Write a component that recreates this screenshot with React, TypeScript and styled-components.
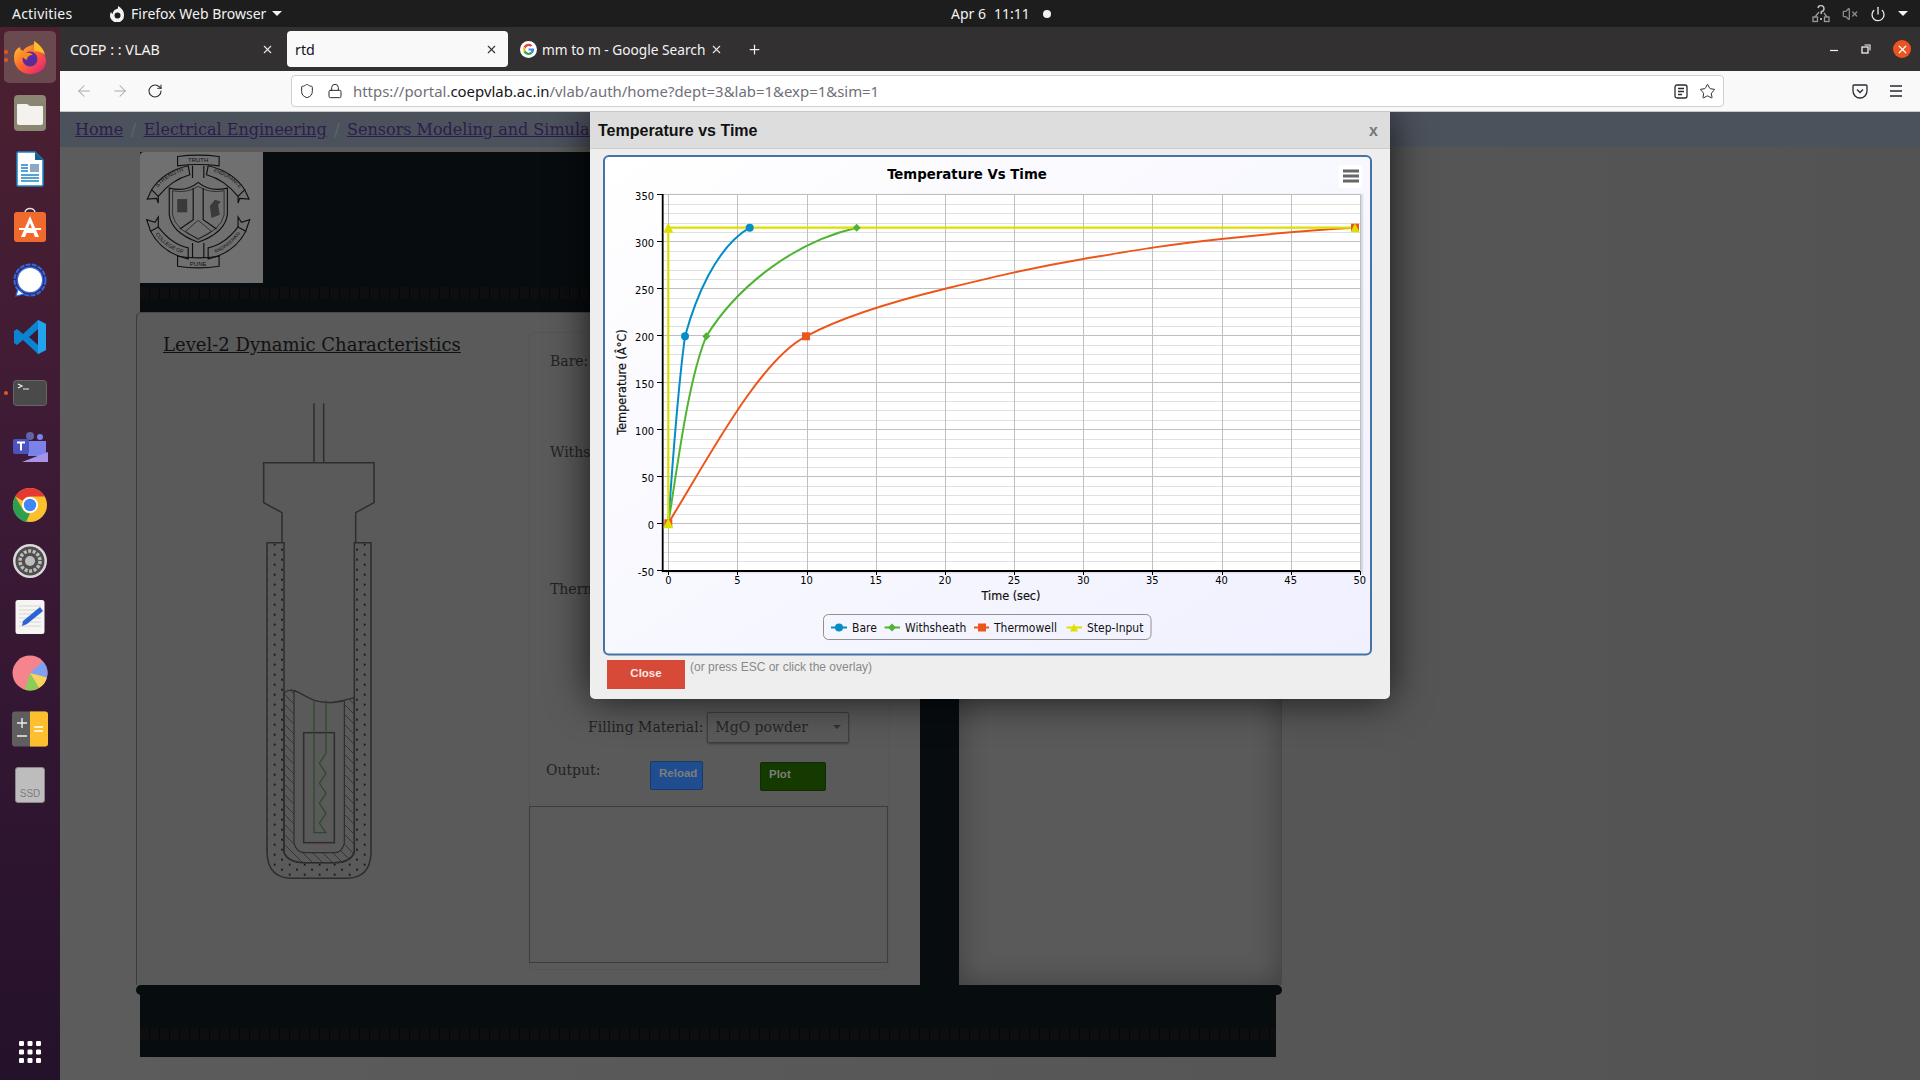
import React from "react";
import styled, { createGlobalStyle } from "styled-components";
import { ArrowLeft, ArrowRight, RotateCw, Shield, Lock, Star, X, Plus, Power, VolumeX } from "lucide-react";

const Global = createGlobalStyle`
  html, body { margin: 0; padding: 0; width: 1920px; height: 1080px; overflow: hidden; background: #575757; }
  * { box-sizing: border-box; }
`;

const UI = `"Noto Sans", "Open Sans", sans-serif`;
const SERIF = `"DejaVu Serif", "Liberation Serif", serif`;
const CHART = `"DejaVu Sans Condensed", "DejaVu Sans", sans-serif`;

const Screen = styled.div`
  width: 1920px;
  height: 1080px;
  display: flex;
  flex-direction: column;
  overflow: hidden;
`;
const TopBar = styled.div`
  height: 27px;
  background: #1d1d1d;
  color: #f2f2f2;
  font: 14px ${UI};
  display: flex;
  align-items: center;
  padding-left: 12px;
  flex: none;
`;
const Activities = styled.span`
  width: 97px;
  letter-spacing: 0.2px;
`;
const AppMenu = styled.div`
  display: flex;
  align-items: center;
  gap: 6px;
  width: 842px;
`;
const Caret = styled.span`
  width: 0;
  height: 0;
  border-left: 5px solid transparent;
  border-right: 5px solid transparent;
  border-top: 5px solid #f2f2f2;
`;
const Clock = styled.div`
  display: flex;
  gap: 8px;
  width: 861px;
  align-items: center;
`;
const ClockDot = styled.span`
  width: 8px;
  height: 8px;
  border-radius: 50%;
  background: #f2f2f2;
  margin-left: 5px;
`;
const Tray = styled.div`
  display: flex;
  align-items: center;
  gap: 12px;
`;
const Body = styled.div`
  flex: 1;
  display: flex;
  min-height: 0;
`;
const Dock = styled.div`
  width: 60px;
  flex: none;
  background: linear-gradient(180deg, #4c2030 0%, #3c1a36 45%, #24112a 100%);
  display: flex;
  flex-direction: column;
  align-items: center;
  padding: 2px 0 14px;
`;
const DockSlot = styled.div<{ $active?: boolean }>`
  position: relative;
  width: 52px;
  height: 56px;
  padding: 2px 0;
  display: flex;
  align-items: center;
  justify-content: center;
  flex: none;
  border-radius: 6px;
  background: ${(p) => (p.$active ? "#6a4a4e" : "transparent")};
  background-clip: content-box;
`;
const DockDot = styled.span<{ $top: number }>`
  position: absolute;
  left: 0;
  top: ${(p) => p.$top}px;
  width: 4px;
  height: 4px;
  border-radius: 50%;
  background: #e95420;
`;
const DockGrid = styled.div`
  margin-top: auto;
  height: 28px;
  display: flex;
  align-items: center;
`;
const Main = styled.div`
  flex: 1;
  display: flex;
  flex-direction: column;
  min-width: 0;
`;
const TabBar = styled.div`
  height: 44px;
  background: #323031;
  display: flex;
  align-items: center;
  color: #f4f4f4;
  font: 14.3px ${UI};
  flex: none;
`;
const Tab = styled.div<{ $w: number; $active?: boolean; $pl: number; $pr: number }>`
  width: ${(p) => p.$w}px;
  height: 36px;
  padding: 0 ${(p) => p.$pr}px 0 ${(p) => p.$pl}px;
  border-radius: 4px;
  display: flex;
  align-items: center;
  gap: 5px;
  background: ${(p) => (p.$active ? "#f9f9fa" : "transparent")};
  color: ${(p) => (p.$active ? "#15141a" : "#f4f4f4")};
  flex: none;
  svg {
    flex: none;
  }
`;
const TabTitle = styled.span<{ $size?: number }>`
  flex: 1;
  min-width: 0;
  white-space: nowrap;
  font-size: ${(p) => p.$size ?? 14.3}px;
`;
const NewTab = styled.span`
  display: flex;
  margin-left: 16px;
`;
const WinControls = styled.div`
  margin-left: auto;
  display: flex;
  align-items: center;
  gap: 22px;
  padding-right: 9px;
`;
const WinClose = styled.div`
  width: 18px;
  height: 18px;
  border-radius: 50%;
  background: #e95420;
  display: flex;
  align-items: center;
  justify-content: center;
  color: #fff;
`;
const NavBar = styled.div`
  height: 41px;
  background: #f9f9fa;
  border-bottom: 1px solid #c8c8c8;
  display: flex;
  align-items: center;
  flex: none;
`;
const NavButtons = styled.div`
  display: flex;
  align-items: center;
  gap: 18px;
  margin-left: 15px;
  width: 216px;
`;
const UrlBox = styled.div`
  width: 1433px;
  height: 32px;
  background: #fff;
  border: 1px solid #cfcfd4;
  border-radius: 4px;
  display: flex;
  align-items: center;
  padding: 0 7px 0 7px;
  font: 14.93px ${UI};
  color: #70707a;
`;
const UrlIcons = styled.div`
  display: flex;
  gap: 12px;
  align-items: center;
  width: 47px;
  margin-right: 7px;
`;
const UrlHost = styled.span`
  color: #15141a;
`;
const UrlEnd = styled.div`
  margin-left: auto;
  display: flex;
  gap: 11px;
  align-items: center;
`;
const NavEnd = styled.div`
  display: flex;
  align-items: center;
  gap: 21px;
  margin-left: 128px;
`;
const Page = styled.div`
  position: relative;
  flex: 1;
  overflow: hidden;
  background: linear-gradient(90deg, #5c5c5c, #535353);
  font-family: ${SERIF};
  display: flex;
  flex-direction: column;
  min-height: 0;
`;
const Crumbs = styled.div`
  height: 35px;
  background: #4c525c;
  padding-left: 15px;
  display: flex;
  align-items: center;
  gap: 7.5px;
  font-size: 16px;
  white-space: nowrap;
  overflow: hidden;
  flex: none;
`;
const Crumb = styled.span`
  color: #2c1c4e;
  text-decoration: underline;
`;
const Slash = styled.span`
  color: #5e6470;
`;
const Banner = styled.div`
  width: 1136px;
  height: 160px;
  margin: 5px 0 0 80px;
  background: #070c0f;
  flex: none;
`;
const LogoWrap = styled.div`
  width: 123px;
  height: 131px;
  background: #707070;
  border-radius: 4px 0 0 0;
  overflow: hidden;
`;
const Stripe = styled.div`
  height: 12px;
  margin-top: 4px;
  background: repeating-linear-gradient(90deg, #0c0e0f 0 9px, #040607 9px 10px);
`;
const FootStripe = styled(Stripe)`
  margin-top: 0;
`;
const Card = styled.div`
  width: 1146px;
  height: 673px;
  margin-left: 76px;
  display: flex;
  flex: none;
`;
const CardLeft = styled.div`
  width: 784px;
  background: #5a5a5a;
  border-left: 1px solid #3a3a3a;
  border-top: 1px solid #484848;
  border-radius: 5px 0 0 0;
  display: flex;
`;
const DiagramCol = styled.div`
  width: 392px;
  flex: none;
`;
const Heading = styled.h2`
  margin: 20px 0 0 26px;
  height: 26px;
  font: 400 18.05px/24px ${SERIF};
  color: #111;
  text-decoration: underline;
  white-space: nowrap;
`;
const SensorSvg = styled.svg`
  display: block;
  margin: 21px 0 0 103px;
`;
const FormPanel = styled.div`
  width: 361px;
  height: 638px;
  margin-top: 19px;
  border: 1px solid #555;
  border-radius: 5px;
  display: flex;
  flex-direction: column;
  font-size: 14px;
  color: #222;
`;
const FieldLabel = styled.div<{ $top: number }>`
  margin: ${(p) => p.$top}px 0 0 20px;
  height: 24px;
  line-height: 24px;
  white-space: nowrap;
`;
const FillRow = styled.div`
  display: flex;
  align-items: center;
  gap: 4px;
  margin: 111px 0 0 58px;
  height: 30px;
`;
const Select = styled.div`
  width: 142px;
  height: 31px;
  border: 1px solid #3e3e3e;
  border-radius: 2px;
  box-shadow: 0 1px 2px rgba(0, 0, 0, 0.3);
  padding: 0 7px;
  display: flex;
  align-items: center;
  justify-content: space-between;
  color: #262626;
`;
const SelectCaret = styled.span`
  width: 0;
  height: 0;
  border-left: 4px solid transparent;
  border-right: 4px solid transparent;
  border-top: 4px solid #333;
`;
const OutputRow = styled.div`
  height: 30px;
  margin-top: 19px;
  display: flex;
  align-items: flex-start;
`;
const OutputLabel = styled.div`
  margin-left: 16px;
  width: 104px;
  line-height: 18px;
`;
const ActionButton = styled.div<{ $w: number; $bg: string; $mt: number; $ml: number }>`
  width: ${(p) => p.$w}px;
  height: 29px;
  margin: ${(p) => p.$mt}px 0 0 ${(p) => p.$ml}px;
  background: ${(p) => p.$bg};
  border: 1px solid rgba(0, 0, 0, 0.25);
  border-radius: 2px;
  color: #7d7d7d;
  font: bold 11.5px "Liberation Sans", sans-serif;
  padding: 5px 8px;
`;
const OutBox = styled.div`
  width: 359px;
  height: 157px;
  margin: 15px 0 0 -1px;
  border: 1px solid #3d3d3d;
`;
const CardGap = styled.div`
  width: 39px;
  background: #070c0f;
`;
const CardRight = styled.div`
  width: 323px;
  background: #5a5a5a;
  box-shadow: inset 0 0 30px rgba(0, 0, 0, 0.3);
  border-right: 1px solid #474747;
`;
const BarEnd = styled.div`
  width: 1146px;
  height: 10px;
  margin-left: 76px;
  background: #070c0f;
  border-radius: 5px;
  flex: none;
`;
const Footer = styled.div`
  width: 1136px;
  height: 63px;
  margin-left: 80px;
  margin-top: -1px;
  padding-top: 34px;
  background: #070c0f;
  flex: none;
`;
const Modal = styled.div`
  position: absolute;
  left: 530px;
  top: 0;
  width: 800px;
  height: 587px;
  background: #eee;
  border-radius: 0 0 5px 5px;
  box-shadow: 0 0 40px rgba(0, 0, 0, 0.75);
  display: flex;
  flex-direction: column;
`;
const ModalHead = styled.div`
  height: 37px;
  background: #ddd;
  border-bottom: 1px solid #ccc;
  display: flex;
  align-items: center;
  justify-content: space-between;
  padding: 1px 12px 0 8px;
  font: bold 16px "Liberation Sans", sans-serif;
  color: #111;
  flex: none;
`;
const ModalX = styled.span`
  color: #777;
  font-size: 16px;
`;
const ChartSvg = styled.svg`
  display: block;
  margin: 6px 0 0 13px;
  flex: none;
`;
const ModalFoot = styled.div`
  display: flex;
  margin: 4px 0 0 17px;
  gap: 5px;
`;
const CloseButton = styled.div`
  width: 78px;
  height: 29px;
  background: #d64a37;
  color: #f6e9e6;
  font: bold 11.5px/27px "Liberation Sans", sans-serif;
  text-align: center;
`;
const Hint = styled.div`
  padding-top: 1px;
  font: 12px/13px "Liberation Sans", sans-serif;
  color: #888;
`;

const Firefox = () => (
  <svg width="36" height="36" viewBox="0 0 36 36">
    <defs>
      <linearGradient id="ff" x1="0" y1="0" x2="1" y2="1">
        <stop offset="0" stopColor="#ffcb2e" />
        <stop offset=".45" stopColor="#ff6a2a" />
        <stop offset="1" stopColor="#e31587" />
      </linearGradient>
    </defs>
    <path d="M2 19C2 11 6 9 8 8c0 2 1 3 3 4 2-4 7-5 11-7-1 3 0 4 3 5 6 3 9 7 9 12 0 8-7 13-16 13S2 28 2 19z" fill="url(#ff)" />
    <path d="M22 2c5 3 10 8 11 14-3-3-7-4-11-4z" fill="#ffbd2e" />
    <circle cx="18" cy="20" r="7.5" fill="#5b2a9e" />
    <path d="M9 15c4-2 9-2 12 1-4 0-6 2-6 5-3-1-5-3-6-6z" fill="#ff8a1e" />
  </svg>
);
const Files = () => (
  <svg width="36" height="38" viewBox="0 0 36 38">
    <rect x="2" y="1" width="32" height="36" rx="4" fill="#8a8672" />
    <path d="M6 10h9l3 2h12a1 1 0 0 1 1 1v16a2 2 0 0 1-2 2H7a2 2 0 0 1-2-2V11a1 1 0 0 1 1-1z" fill="#f4f2ee" />
  </svg>
);
const Writer = () => (
  <svg width="30" height="36" viewBox="0 0 30 36">
    <path d="M3 1h17l8 8v25a1 1 0 0 1-1 1H3a1 1 0 0 1-1-1V2a1 1 0 0 1 1-1z" fill="#fff" stroke="#1b85c6" strokeWidth="1.5" />
    <path d="M20 1l8 8h-8z" fill="#18618f" />
    <path d="M6 14h7M6 17h7M6 20h7M6 24h18M6 27h18M6 30h18" stroke="#1b85c6" strokeWidth="1.6" />
    <rect x="15" y="13" width="9" height="8" fill="#89a9c4" />
  </svg>
);
const Store = () => (
  <svg width="36" height="38" viewBox="0 0 36 38">
    <path d="M13 7c0-6 10-6 10 0" fill="none" stroke="#ddd" strokeWidth="1.6" />
    <rect x="2" y="6" width="32" height="30" rx="3" fill="#ef6a2c" />
    <path d="M18 10l9 21h-4l-1.6-4h-6.8L13 31H9zM15.5 24h5L18 17z" fill="#fff" />
    <rect x="7" y="22" width="22" height="2" fill="#fff" />
  </svg>
);
const Signal = () => (
  <svg width="34" height="36" viewBox="0 0 34 36">
    <circle cx="17" cy="17" r="15.5" fill="none" stroke="#2c6bed" strokeWidth="2" strokeDasharray="5 1.2" />
    <circle cx="17" cy="17" r="13.5" fill="#2c6bed" />
    <circle cx="17" cy="17" r="12" fill="#fff" />
    <path d="M5 26l-2 7 8-2z" fill="#fff" stroke="#2c6bed" strokeWidth="1.2" />
  </svg>
);
const VSCode = () => (
  <svg width="36" height="36" viewBox="0 0 36 36">
    <path d="M26 1l8 4v26l-8 4L11 21l-6 5-3-2v-12l3-2 6 5z" fill="#0a84d0" />
    <path d="M26 10l-9 8 9 8z" fill="#3c1a36" />
    <path d="M26 1l8 4v26l-8 4z" fill="#22a3ec" />
  </svg>
);
const Terminal = () => (
  <svg width="34" height="26" viewBox="0 0 34 26">
    <rect x="0.5" y="0.5" width="33" height="25" rx="3" fill="#4a4a4a" stroke="#666" />
    <path d="M5 4l4 2-4 2M10 9h6" fill="none" stroke="#eee" strokeWidth="1.2" />
  </svg>
);
const Teams = () => (
  <svg width="36" height="34" viewBox="0 0 36 34">
    <circle cx="18" cy="4" r="4" fill="#6264a7" />
    <circle cx="28" cy="5" r="3" fill="#7b83eb" />
    <rect x="16" y="9" width="18" height="15" fill="#7b83eb" />
    <path d="M10 30l26-10v10z" fill="#a794e6" />
    <rect x="1" y="7" width="16" height="15" rx="2" fill="#4b53bc" />
    <path d="M5 10.500h8M9 10.500v8" stroke="#fff" strokeWidth="2" />
  </svg>
);
const Chrome = () => (
  <svg width="36" height="36" viewBox="0 0 36 36">
    <circle cx="18" cy="18" r="17" fill="#fbc02d" />
    <path d="M18 1a17 17 0 0 1 14.700 8.500H18a8.500 8.500 0 0 0-7.400 4.300L3.300 9.500A17 17 0 0 1 18 1z" fill="#e53935" />
    <path d="M3.300 9.500l7.400 12.800a8.500 8.500 0 0 0 7.300 4.200L14 35a17 17 0 0 1-10.700-25.500z" fill="#2e9e4f" />
    <circle cx="18" cy="18" r="8" fill="#fff" />
    <circle cx="18" cy="18" r="6.200" fill="#4285f4" />
  </svg>
);
const Settings = () => (
  <svg width="36" height="36" viewBox="0 0 36 36">
    <circle cx="18" cy="18" r="17" fill="#d9d9d9" />
    <circle cx="18" cy="18" r="14.500" fill="#4f4f4f" />
    <circle cx="18" cy="18" r="10" fill="none" stroke="#bdbdbd" strokeWidth="3.500" strokeDasharray="3 1.500" />
    <circle cx="18" cy="18" r="5" fill="#bdbdbd" />
  </svg>
);
const Editor = () => (
  <svg width="30" height="36" viewBox="0 0 30 36">
    <rect x="0.5" y="1" width="29" height="34" rx="2.500" fill="#f6f5f4" />
    <path d="M4 7h22M4 11h22M4 15h22M4 19h22M4 23h22M4 27h22" stroke="#d5d5d5" />
    <path d="M25 8l3 4L12 25l-5 2 1-5z" fill="#2a63d6" />
  </svg>
);
const Pie = () => (
  <svg width="36" height="36" viewBox="0 0 36 36">
    <circle cx="18" cy="18" r="17.500" fill="#f5848c" />
    <path d="M18 18L31 6.500A17.500 17.500 0 0 1 35.500 18a17 17 0 0 1-.6 4.500z" fill="#7ea1f2" />
    <path d="M18 18l16.900 4.500A17.500 17.500 0 0 1 27 33z" fill="#f6d55c" />
    <path d="M18 18l9 15A17.500 17.500 0 0 1 13 34.800z" fill="#8ccd5a" />
  </svg>
);
const Calc = () => (
  <svg width="36" height="36" viewBox="0 0 36 36">
    <rect y="0.500" width="36" height="35" rx="3" fill="#5e5e5e" />
    <path d="M18 .5h15a3 3 0 0 1 3 3v29a3 3 0 0 1-3 3H18z" fill="#fdbf2d" />
    <path d="M5 12h10M10 7v10M5 25h10" stroke="#eee" strokeWidth="1.400" />
    <path d="M22 16h9M22 20h9" stroke="#fff" strokeWidth="1.400" />
  </svg>
);
const SSD = () => (
  <svg width="30" height="36" viewBox="0 0 30 36">
    <rect x="0.500" y="0.500" width="29" height="35" rx="2.500" fill="#bdbdbd" stroke="#888" />
    <text x="15" y="30" textAnchor="middle" fontSize="10" fontFamily="Liberation Sans" fill="#7d7d7d">SSD</text>
  </svg>
);
const GridIcon = () => (
  <svg width="24" height="24" viewBox="0 0 24 24" fill="#fff">
    {[1, 9.500, 18].flatMap((y) =>
      [1, 9.500, 18].map((x) => <rect key={`${x}-${y}`} x={x} y={y} width="5" height="5" rx="1.200" />),
    )}
  </svg>
);
const Google = () => (
  <svg width="17" height="17" viewBox="0 0 16 16">
    <circle cx="8" cy="8" r="8" fill="#fff" />
    <path d="M8 2.700a5.300 5.300 0 0 1 3.500 1.300L10 5.500A3 3 0 0 0 5.200 7L3.400 5.500A5.300 5.300 0 0 1 8 2.700z" fill="#ea4335" />
    <path d="M3.400 5.500L5.200 7a3 3 0 0 0 0 2l-1.800 1.500a5.300 5.300 0 0 1 0-5z" fill="#fbbc05" />
    <path d="M3.400 10.500L5.200 9a3 3 0 0 0 4.700 1.300l1.700 1.400a5.300 5.300 0 0 1-8.200-1.200z" fill="#34a853" />
    <path d="M8 7h5.200c.3 2-.3 3.600-1.600 4.700L9.900 10.300A2 2 0 0 0 10.700 9H8z" fill="#4285f4" />
  </svg>
);
const FoxGlyph = () => (
  <svg width="16" height="16" viewBox="0 0 16 16">
    <path d="M9 0c3 2 6 4 6 9a7 7 0 1 1-13-3c.5 1 1 1.500 1.500 2C4 5 6 3 9 2.500z" fill="#f2f2f2" />
    <circle cx="8.500" cy="9.500" r="3" fill="#1d1d1d" />
  </svg>
);
const NetQuestion = () => (
  <svg width="18" height="18" viewBox="0 0 18 18" fill="none" stroke="#9a9a9a" strokeWidth="1.300">
    <rect x="1" y="12" width="4.500" height="4.500" />
    <rect x="12.500" y="12" width="4.500" height="4.500" />
    <path d="M3 12l4-5M15 12l-3-4" />
    <path d="M6 3a3 3 0 1 1 3.500 3.500L9 9" stroke="#bdbdbd" strokeWidth="1.600" />
    <circle cx="9" cy="14" r="1" fill="#ddd" stroke="none" />
  </svg>
);
const Reader = () => (
  <svg width="14" height="15" viewBox="0 0 14 15" fill="none" stroke="#2b2a33" strokeWidth="1.300">
    <rect x="1" y="1" width="12" height="13" rx="2" />
    <path d="M4 4.500h6M4 7.500h6M4 10.500h4" />
  </svg>
);
const Pocket = () => (
  <svg width="16" height="15" viewBox="0 0 16 15" fill="none" stroke="#2b2a33" strokeWidth="1.300">
    <path d="M2 1h12a1 1 0 0 1 1 1v5a7 7 0 0 1-14 0V2a1 1 0 0 1 1-1z" />
    <path d="M5 5.500l3 3 3-3" />
  </svg>
);
const Hamburger = () => (
  <svg width="14" height="12" viewBox="0 0 14 12" stroke="#2b2a33" strokeWidth="1.300">
    <path d="M1 1h12M1 6h12M1 11h12" />
  </svg>
);
const Minimize = () => (
  <svg width="10" height="10" viewBox="0 0 10 10" stroke="#f2f2f2" strokeWidth="1.200">
    <path d="M1 6.500h8" />
  </svg>
);
const Restore = () => (
  <svg width="10" height="10" viewBox="0 0 10 10" fill="none" stroke="#f2f2f2" strokeWidth="1.100">
    <rect x="1" y="3" width="6" height="6" strokeWidth="1.300" />
    <path d="M3.500 1h5.500v5.500" />
  </svg>
);

const Logo = () => (
  <svg width="123" height="131" viewBox="30 37 370 393">
    <defs>
      <path id="r1" d="M78 150Q110 108 170 92" />
      <path id="r2" d="M240 92Q300 108 338 155" />
      <path id="r3" d="M70 275Q100 325 168 345" />
      <path id="r4" d="M240 345Q310 325 340 265" />
    </defs>
    <g fill="none" stroke="#111" strokeWidth="3.500">
      <path d="M143 50Q205 42 268 50V78Q205 70 143 78z" />
      <path d="M188 78V115M222 78V115M188 355V310M222 355V310" />
      <path d="M143 350Q205 360 268 350V380Q205 390 143 380z" />
      <path d="M65 150Q100 95 175 78L180 105Q125 120 85 170z" />
      <path d="M65 150L52 178 80 176 85 190 85 170" />
      <path d="M345 150Q310 95 235 78L230 105Q285 120 325 170z" />
      <path d="M345 150L358 178 330 176 325 190 325 170" />
      <path d="M62 275Q95 340 175 358V325Q125 315 85 262z" />
      <path d="M62 275L50 240 75 248 85 232 85 262" />
      <path d="M348 275Q315 340 235 358V325Q285 315 325 262z" />
      <path d="M348 275L360 240 335 248 325 232 325 262" />
      <path d="M118 145Q170 158 205 128Q240 158 293 145V225Q285 280 205 308Q125 280 118 225z" />
      <path d="M128 153Q170 162 205 140Q240 162 283 153V225Q275 270 205 297Q135 270 128 225z" strokeWidth="2" />
      <path d="M190 145V240L150 268M220 145V240L260 268" />
      <path d="M167 275L205 242 245 275 205 300z" strokeWidth="2" />
    </g>
    <rect x="142" y="178" width="30" height="40" fill="#3a3a3a" />
    <path d="M240 200l15-20 18 5-8 10 5 30-25 10z" fill="#3a3a3a" />
    <g fontFamily="Liberation Sans, sans-serif" fontSize="18" fill="#111" textAnchor="middle">
      <text x="205" y="68">TRUTH</text>
      <text x="205" y="379">PUNE</text>
      <text fontSize="17"><textPath href="#r1" startOffset="50%">STRENGTH</textPath></text>
      <text fontSize="15"><textPath href="#r2" startOffset="50%">ENDURANCE</textPath></text>
      <text fontSize="16"><textPath href="#r3" startOffset="50%">COLLEGE OF</textPath></text>
      <text fontSize="14"><textPath href="#r4" startOffset="50%">ENGINEERING</textPath></text>
    </g>
  </svg>
);

const Sensor = () => (
  <SensorSvg width="180" height="520" viewBox="0 0 540 1560">
    <defs>
      <pattern id="hatch" width="30" height="30" patternUnits="userSpaceOnUse">
        <path d="M-5 -5L35 35M-5 25L5 35M25 -5L35 5" stroke="#2d2d2d" strokeWidth="2.500" />
      </pattern>
      <pattern id="dots" x="6" y="8" width="45" height="60" patternUnits="userSpaceOnUse">
        <circle cx="8" cy="6" r="3.200" fill="#111" />
        <circle cx="30" cy="21" r="3.200" fill="#111" />
        <circle cx="8" cy="36" r="3.200" fill="#111" />
        <circle cx="30" cy="51" r="3.200" fill="#111" />
      </pattern>
    </defs>
    <path d="M81 488H132V1418Q145 1448 195 1448H285Q330 1448 343 1418V488H393V1420Q390 1495 320 1495H155Q85 1495 81 1420z" fill="url(#dots)" stroke="#2d2d2d" strokeWidth="4.500" />
    <path d="M132 938C150 925 165 930 190 945C215 960 230 966 270 968C300 966 320 958 343 953V1418Q330 1448 285 1448H195Q145 1448 132 1418z" fill="url(#hatch)" stroke="#2d2d2d" strokeWidth="3.500" />
    <path d="M162 932V1390Q170 1418 195 1418H285Q305 1418 313 1390V962C295 966 285 968 270 968C230 966 215 960 190 945Q175 936 162 932z" fill="#5a5a5a" stroke="#2d2d2d" strokeWidth="3.500" />
    <g fill="none" stroke="#2d2d2d" strokeWidth="4.500">
      <path d="M222 70V248M251 70V248" />
      <path d="M126 488V398L71 368V248H402V368L347 398V488" />
      <rect x="191" y="1058" width="92" height="330" />
    </g>
    <path d="M222 962V1358H258L238 1330L258 1300L238 1270L258 1240L238 1210L258 1180L238 1150L258 1120V962" fill="none" stroke="#274a27" strokeWidth="3.500" />
  </SensorSvg>
);

const yOf = (v: number) => 523.3 - v * 0.94;
const xOf = (t: number) => 668.3 + t * 13.83;
const MAJOR_Y = [-50, 0, 50, 100, 150, 200, 250, 300, 350];
const MINOR_Y = Array.from({ length: 41 }, (_, i) => -50 + i * 10).filter((v) => v % 50 !== 0);
const MAJOR_X = [0, 5, 10, 15, 20, 25, 30, 35, 40, 45, 50];
const BLUE = "#058DC7";
const GREEN = "#50B432";
const ORANGE = "#ED561B";
const YELLOW = "#DDDF00";

const Tri = ({ x, y, s = 5 }: { x: number; y: number; s?: number }) => (
  <path d={`M${x} ${y - s}L${x + s} ${y + s}H${x - s}z`} fill={YELLOW} />
);
const Dia = ({ x, y, s = 4 }: { x: number; y: number; s?: number }) => (
  <path d={`M${x} ${y - s}L${x + s} ${y}L${x} ${y + s}L${x - s} ${y}z`} fill={GREEN} />
);
const Sq = ({ x, y, s = 4 }: { x: number; y: number; s?: number }) => (
  <rect x={x - s} y={y - s} width={2 * s} height={2 * s} fill={ORANGE} />
);

const Chart = () => (
  <ChartSvg width="769" height="501" viewBox="603 155 769 501" fontFamily={CHART}>
    <defs>
      <linearGradient id="chartBg" x1="0" y1="0" x2="1" y2="1">
        <stop offset="0" stopColor="#ffffff" />
        <stop offset="1" stopColor="#f0f0ff" />
      </linearGradient>
    </defs>
    <rect x="604" y="156" width="767" height="498.500" rx="5" fill="url(#chartBg)" stroke="#4572A7" strokeWidth="2" />
    <g fill="none" stroke="#000">
      <rect x="664" y="196" width="697" height="375" strokeOpacity=".05" strokeWidth="5" />
      <rect x="664" y="196" width="697" height="375" strokeOpacity=".07" strokeWidth="3" />
    </g>
    <rect x="662.500" y="194.500" width="697.500" height="375.500" fill="#fff" />
    <g stroke="#E0E0E0">
      {MINOR_Y.map((v) => (
        <path key={v} d={`M662.500 ${Math.round(yOf(v)) + 0.5}H1360`} />
      ))}
    </g>
    <g stroke="#C0C0C0">
      {MAJOR_Y.map((v) => (
        <path key={v} d={`M662.500 ${Math.round(yOf(v)) + 0.5}H1360`} />
      ))}
      {MAJOR_X.map((t) => (
        <path key={t} d={`M${Math.round(xOf(t)) + 0.5} 194.500V570`} />
      ))}
    </g>
    <path d="M662.700 194V571H1360" fill="none" stroke="#000" strokeWidth="1.800" />
    <g stroke="#000">
      {MAJOR_Y.map((v) => (
        <path key={v} d={`M657 ${Math.round(yOf(v)) + 0.5}H662`} />
      ))}
      {MAJOR_X.map((t) => (
        <path key={t} d={`M${Math.round(xOf(t)) + 0.5} 571V575`} />
      ))}
    </g>
    <g fontSize="11" fill="#000" textAnchor="end">
      {MAJOR_Y.map((v) => (
        <text key={v} x="654" y={yOf(v) + 5.5}>{v}</text>
      ))}
    </g>
    <g fontSize="11" fill="#000" textAnchor="middle">
      {MAJOR_X.map((t) => (
        <text key={t} x={xOf(t)} y="584">{t}</text>
      ))}
    </g>
    <g fill="none" strokeWidth="2">
      <path d="M668.300 523.300C672 470 679 380 685 336.300C695 300 715 248 749.700 227.700" stroke={BLUE} />
      <path d="M668.300 523.300C677 470 688 380 706.300 336.300C735 290 790 243 856.700 227.700" stroke={GREEN} />
      <path d="M668.300 523.300C710 455 760 360 806 336.300C840 318 895 301 944.300 289S1030 268 1083.300 259S1165 245 1221.300 239S1310 230 1355 227.700" stroke={ORANGE} />
      <path d="M668.300 523.300V227.700H1355" stroke={YELLOW} strokeWidth="2.200" />
    </g>
    <circle cx="685" cy="336.300" r="4" fill={BLUE} />
    <circle cx="749.700" cy="227.700" r="4" fill={BLUE} />
    <Dia x={706.300} y={336.300} />
    <Dia x={856.700} y={227.700} />
    <Sq x={806} y={336.300} />
    <Sq x={668.300} y={523.300} />
    <Sq x={1355} y={227.700} />
    <Tri x={668.300} y={227.700} />
    <Tri x={668.300} y={523.300} />
    <Tri x={1355} y={227.700} s={4.500} />
    <text x="967" y="179" textAnchor="middle" fontSize="14.8" fontWeight="bold" fill="#000">Temperature Vs Time</text>
    <text transform="translate(626 382) rotate(-90)" textAnchor="middle" fontSize="12.6" fill="#111" stroke="#111" strokeWidth=".2">Temperature (Â°C)</text>
    <text x="1011" y="600" textAnchor="middle" fontSize="12.5" fill="#111" stroke="#111" strokeWidth=".2">Time (sec)</text>
    <rect x="1338.500" y="165" width="24" height="23" rx="3" fill="#fff" />
    <path d="M1343 171H1359M1343 176H1359M1343 181H1359" stroke="#666" strokeWidth="3" />
    <rect x="823.500" y="614.500" width="327.500" height="25" rx="5" fill="none" stroke="#909090" />
    <g fontSize="12" fill="#111">
      <path d="M831 627.500H847" stroke={BLUE} strokeWidth="2" />
      <circle cx="839" cy="627.500" r="4" fill={BLUE} />
      <text x="852" y="632">Bare</text>
      <path d="M884.500 627.500H900" stroke={GREEN} strokeWidth="2" />
      <Dia x={892} y={627.500} />
      <text x="905" y="632">Withsheath</text>
      <path d="M974 627.500H989" stroke={ORANGE} strokeWidth="2" />
      <Sq x={982} y={627.500} />
      <text x="994" y="632">Thermowell</text>
      <path d="M1066.500 627.500H1082" stroke={YELLOW} strokeWidth="2" />
      <Tri x={1074} y={627.500} s={4} />
      <text x="1087" y="632">Step-Input</text>
    </g>
  </ChartSvg>
);

const DOCK = [Firefox, Files, Writer, Store, Signal, VSCode, Terminal, Teams, Chrome, Settings, Editor, Pie, Calc, SSD];

export default function App() {
  return (
    <Screen>
      <Global />
      <TopBar>
        <Activities>Activities</Activities>
        <AppMenu>
          <FoxGlyph />
          <span>Firefox Web Browser</span>
          <Caret />
        </AppMenu>
        <Clock>
          <span>Apr 6</span>
          <span>11:11</span>
          <ClockDot />
        </Clock>
        <Tray>
          <NetQuestion />
          <VolumeX size={16} color="#8a8a8a" />
          <Power size={16} color="#e8e8e8" />
          <Caret />
        </Tray>
      </TopBar>
      <Body>
        <Dock>
          {DOCK.map((Icon, i) => (
            <DockSlot key={i} $active={i === 0}>
              {i === 0 && <DockDot $top={21} />}
              {i === 0 && <DockDot $top={29} />}
              {i === 6 && <DockDot $top={26} />}
              <Icon />
            </DockSlot>
          ))}
          <DockGrid>
            <GridIcon />
          </DockGrid>
        </Dock>
        <Main>
          <TabBar>
            <Tab $w={227} $pl={10} $pr={13}>
              <TabTitle>COEP : : VLAB</TabTitle>
              <X size={13} color="#e8e8e8" />
            </Tab>
            <Tab $w={221} $pl={8} $pr={10} $active>
              <TabTitle>rtd</TabTitle>
              <X size={13} color="#333" />
            </Tab>
            <Tab $w={223} $pl={12} $pr={8}>
              <Google />
              <TabTitle $size={13.7}>mm to m - Google Search</TabTitle>
              <X size={13} color="#e8e8e8" />
            </Tab>
            <NewTab>
              <Plus size={15} color="#eee" />
            </NewTab>
            <WinControls>
              <Minimize />
              <Restore />
              <WinClose>
                <X size={13} strokeWidth={2.2} />
              </WinClose>
            </WinControls>
          </TabBar>
          <NavBar>
            <NavButtons>
              <ArrowLeft size={18} color="#a9a9ae" strokeWidth={1.4} />
              <ArrowRight size={18} color="#a9a9ae" strokeWidth={1.4} />
              <RotateCw size={16} color="#2b2a33" strokeWidth={1.6} />
            </NavButtons>
            <UrlBox>
              <UrlIcons>
                <Shield size={16} color="#2b2a33" strokeWidth={1.5} />
                <Lock size={16} color="#2b2a33" strokeWidth={1.5} />
              </UrlIcons>
              <span>
                https://portal.<UrlHost>coepvlab.ac.in</UrlHost>/vlab/auth/home?dept=3&amp;lab=1&amp;exp=1&amp;sim=1
              </span>
              <UrlEnd>
                <Reader />
                <Star size={17} color="#2b2a33" strokeWidth={1.4} />
              </UrlEnd>
            </UrlBox>
            <NavEnd>
              <Pocket />
              <Hamburger />
            </NavEnd>
          </NavBar>
          <Page>
            <Crumbs>
              <Crumb>Home</Crumb>
              <Slash>/</Slash>
              <Crumb>Electrical Engineering</Crumb>
              <Slash>/</Slash>
              <Crumb>Sensors Modeling and Simulation</Crumb>
            </Crumbs>
            <Banner>
              <LogoWrap>
                <Logo />
              </LogoWrap>
              <Stripe />
            </Banner>
            <Card>
              <CardLeft>
                <DiagramCol>
                  <Heading>Level-2 Dynamic Characteristics</Heading>
                  <Sensor />
                </DiagramCol>
                <FormPanel>
                  <FieldLabel $top={16}>Bare:</FieldLabel>
                  <FieldLabel $top={67}>Withsheath:</FieldLabel>
                  <FieldLabel $top={113}>Thermowell:</FieldLabel>
                  <FillRow>
                    <span>Filling Material:</span>
                    <Select>
                      <span>MgO powder</span>
                      <SelectCaret />
                    </Select>
                  </FillRow>
                  <OutputRow>
                    <OutputLabel>Output:</OutputLabel>
                    <ActionButton $w={53} $bg="#1f4d8f" $mt={0} $ml={0}>Reload</ActionButton>
                    <ActionButton $w={66} $bg="#153a00" $mt={1} $ml={57}>Plot</ActionButton>
                  </OutputRow>
                  <OutBox />
                </FormPanel>
              </CardLeft>
              <CardGap />
              <CardRight />
            </Card>
            <BarEnd />
            <Footer>
              <FootStripe />
            </Footer>
            <Modal>
              <ModalHead>
                <span>Temperature vs Time</span>
                <ModalX>x</ModalX>
              </ModalHead>
              <Chart />
              <ModalFoot>
                <CloseButton>Close</CloseButton>
                <Hint>(or press ESC or click the overlay)</Hint>
              </ModalFoot>
            </Modal>
          </Page>
        </Main>
      </Body>
    </Screen>
  );
}
